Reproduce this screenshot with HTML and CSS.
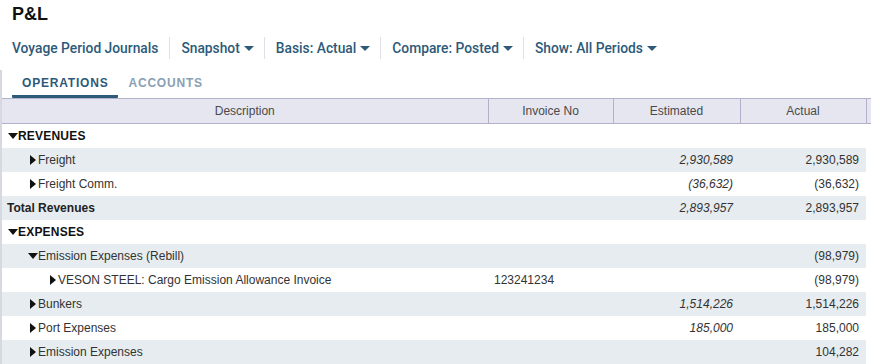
FILE: index.html
```html
<!DOCTYPE html>
<html>
<head>
<meta charset="utf-8">
<link rel="stylesheet" href="styles.css">
</head>
<body>
<h1 class="title">P&amp;L</h1>
<div class="toolbar">
  <span class="tb-item">Voyage Period Journals</span>
  <span class="tb-item">Snapshot <i class="caret"></i></span>
  <span class="tb-item">Basis: Actual <i class="caret"></i></span>
  <span class="tb-item">Compare: Posted <i class="caret"></i></span>
  <span class="tb-item">Show: All Periods <i class="caret"></i></span>
</div>
<div class="panel">
  <div class="tabs">
    <span class="tab active">OPERATIONS</span>
    <span class="tab">ACCOUNTS</span>
  </div>
  <table class="grid">
    <colgroup>
      <col class="c-desc"><col class="c-inv"><col class="c-num"><col class="c-num2"><col class="c-extra">
    </colgroup>
    <thead>
      <tr><th>Description</th><th>Invoice No</th><th>Estimated</th><th>Actual</th><th></th></tr>
    </thead>
    <tbody>
      <tr><td class="sec"><i class="tri down"></i>REVENUES</td><td></td><td></td><td></td><td></td></tr>
      <tr class="alt"><td class="l1"><i class="tri right"></i>Freight</td><td></td><td class="num est">2,930,589</td><td class="num">2,930,589</td><td></td></tr>
      <tr><td class="l1"><i class="tri right"></i>Freight Comm.</td><td></td><td class="num est">(36,632)</td><td class="num">(36,632)</td><td></td></tr>
      <tr class="alt"><td class="total">Total Revenues</td><td></td><td class="num est">2,893,957</td><td class="num">2,893,957</td><td></td></tr>
      <tr><td class="sec"><i class="tri down"></i>EXPENSES</td><td></td><td></td><td></td><td></td></tr>
      <tr class="alt"><td class="l1"><i class="tri down"></i>Emission Expenses (Rebill)</td><td></td><td></td><td class="num">(98,979)</td><td></td></tr>
      <tr><td class="l2"><i class="tri right"></i>VESON STEEL: Cargo Emission Allowance Invoice</td><td class="inv">123241234</td><td></td><td class="num">(98,979)</td><td></td></tr>
      <tr class="alt"><td class="l1"><i class="tri right"></i>Bunkers</td><td></td><td class="num est">1,514,226</td><td class="num">1,514,226</td><td></td></tr>
      <tr><td class="l1"><i class="tri right"></i>Port Expenses</td><td></td><td class="num est">185,000</td><td class="num">185,000</td><td></td></tr>
      <tr class="alt"><td class="l1"><i class="tri right"></i>Emission Expenses</td><td></td><td></td><td class="num">104,282</td><td></td></tr>
    </tbody>
  </table>
</div>
</body>
</html>
```
FILE: styles.css
```css
html, body {
  margin: 0;
  padding: 0;
  background: #ffffff;
  font-family: "Liberation Sans", Arial, sans-serif;
  color: #333333;
  overflow: hidden;
}

.title {
  margin: 0;
  padding: 3px 12px 0;
  font-size: 18px;
  line-height: 22px;
  font-weight: bold;
  color: #111111;
}

.toolbar {
  display: flex;
  align-items: center;
  margin-top: 11px;
  height: 24px;
  padding-left: 1px;
}

.tb-item {
  display: flex;
  align-items: center;
  gap: 4px;
  padding: 0 10px 0 11px;
  height: 22px;
  font-family: Roboto, "Liberation Sans", Arial, sans-serif;
  font-size: 13.8px;
  font-weight: 500;
  color: #2d5a79;
  border-left: 1px solid #dde0e5;
  white-space: nowrap;
}

.tb-item:first-child {
  border-left: none;
  padding-right: 11px;
}

.caret {
  display: inline-block;
  width: 0;
  height: 0;
  border-left: 5px solid transparent;
  border-right: 5px solid transparent;
  border-top: 5px solid #2d5a79;
  margin-top: 1px;
}

.panel {
  margin-top: 10px;
  border-left: 2px solid #d6d9e0;
}

.tabs {
  display: flex;
  padding-left: 10px;
  height: 28px;
  align-items: stretch;
}

.tab {
  display: flex;
  align-items: center;
  padding: 0 10px;
  font-size: 12px;
  font-weight: bold;
  letter-spacing: 0.8px;
  color: #8aa0b2;
  border-bottom: 3px solid transparent;
  border-radius: 0 0 1px 1px;
}

.tab.active {
  color: #2d5a79;
  border-bottom-color: #2d5a79;
}

.grid {
  width: 869px;
  border-collapse: collapse;
  table-layout: fixed;
  font-size: 12px;
}

.c-desc { width: 486px; }
.c-inv { width: 125px; }
.c-num { width: 127px; }
.c-num2 { width: 126px; }
.c-extra { width: 5px; }

.grid th {
  height: 24px;
  padding: 0;
  background: #e5e6f0;
  border-top: 1px solid #b4b0cc;
  border-bottom: 1px solid #b4b0cc;
  border-left: 1px solid #b4b0cc;
  font-weight: normal;
  color: #4a4a4a;
  text-align: center;
}

.grid th:first-child {
  border-left: none;
}

.grid td {
  height: 24px;
  padding: 0;
  white-space: nowrap;
  color: #333333;
}

.grid tr.alt td {
  background: #e6ecf0;
}

.grid tr.alt td:last-child {
  background: #ffffff;
}

.sec {
  padding-left: 6px !important;
  font-weight: bold;
  letter-spacing: 0.2px;
  color: #111111 !important;
}

.total {
  padding-left: 5px !important;
  font-weight: bold;
  color: #222222 !important;
}

.l1 {
  padding-left: 28px !important;
}

.l2 {
  padding-left: 48px !important;
}

.inv {
  padding-left: 6px !important;
}

.num {
  text-align: right;
  padding-right: 7px !important;
}

.num.est {
  font-style: italic;
}

.tri {
  display: inline-block;
  width: 0;
  height: 0;
  vertical-align: middle;
}

.tri.down {
  border-left: 5px solid transparent;
  border-right: 5px solid transparent;
  border-top: 6px solid #111111;
  margin-top: -2px;
}

.l1 .tri.down {
  margin-left: -2px;
}

.tri.right {
  border-top: 5px solid transparent;
  border-bottom: 5px solid transparent;
  border-left: 6px solid #111111;
  margin-right: 2px;
  margin-top: -2px;
}
```
